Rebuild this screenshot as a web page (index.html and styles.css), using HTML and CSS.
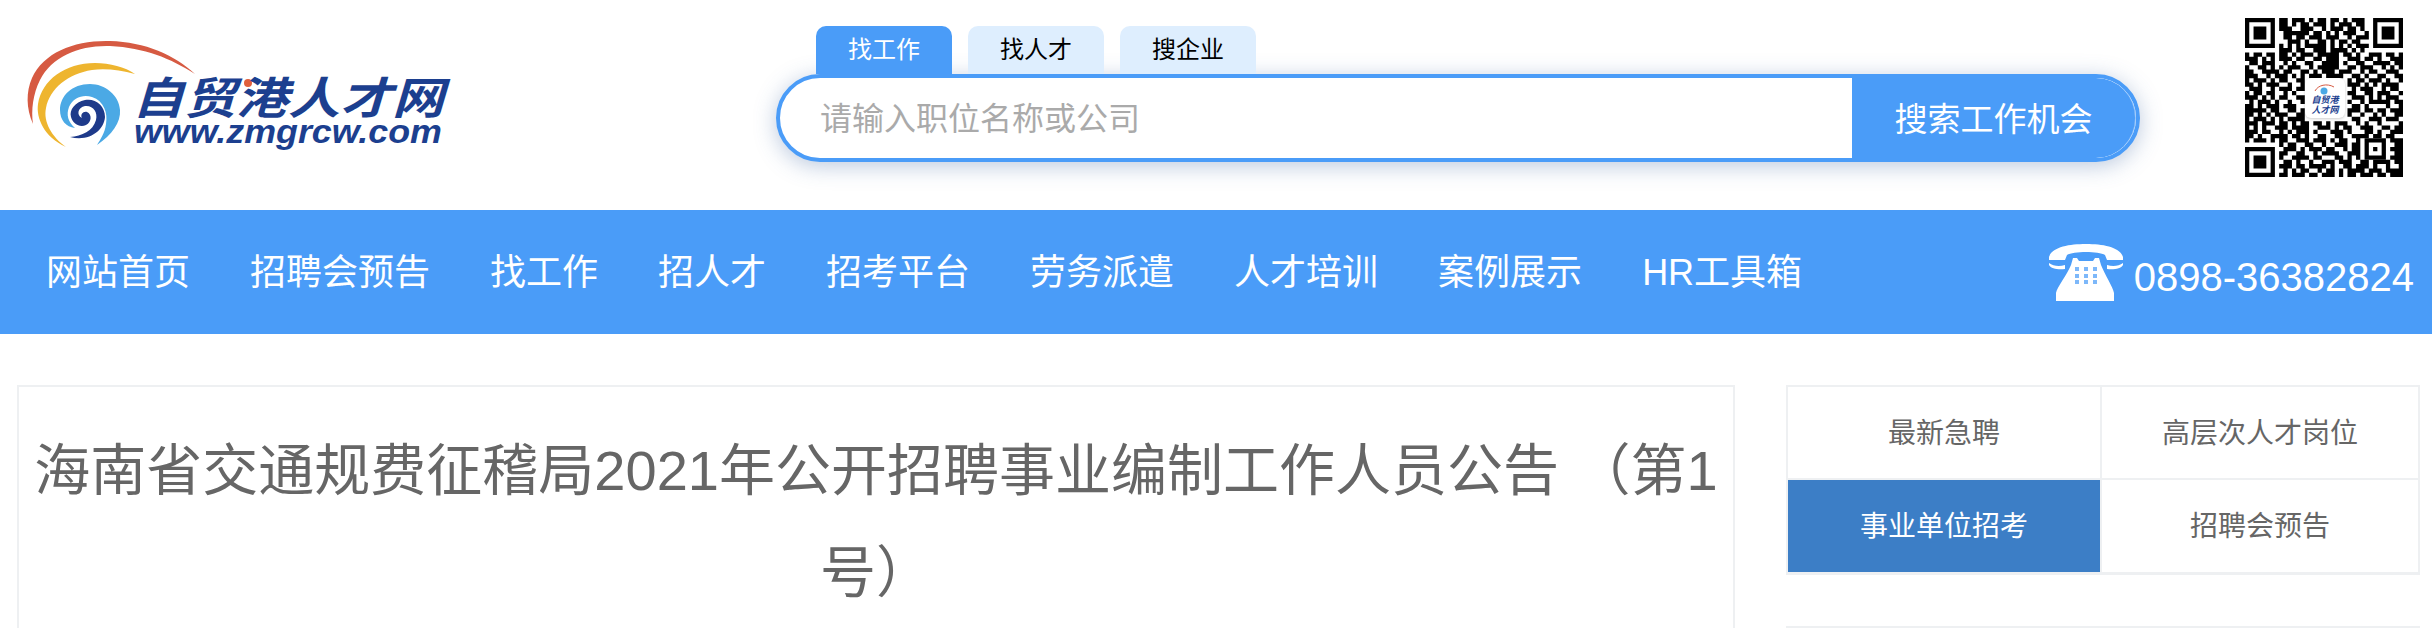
FILE: index.html
```html
<!DOCTYPE html>
<html lang="zh-CN">
<head>
    <meta charset="UTF-8">
    <meta name="viewport" content="width=device-width, initial-scale=1.0">
    <title>海南省交通规费征稽局2021年公开招聘事业编制工作人员公告</title>
    <link rel="stylesheet" href="styles.css">
</head>
<body>
    <header class="header">
        <a class="logo" href="#">
            <svg width="460" height="160" viewBox="0 0 460 160">
                <path fill="#d65a42" d="M33 124C26 108 26 92 32 78C44 52 75 40 110 41C145 42 175 55 195 74C170 58 145 48 110 46C80 45 52 56 40 80C33 94 31 110 33 124Z"/>
                <path fill="#eeb52f" d="M66 147C44 137 36 118 38 104C42 80 65 63 95 63C110 63 125 67 135 74C120 70 105 68 92 70C68 74 50 88 46 108C43 122 52 137 66 147Z"/>
                <path fill="#4ba9e5" d="M97 145C112 135 121 122 120 110C119 95 105 84 90 84C72 84 60 96 60 110C60 120 66 127 75 128C68 122 66 115 69 107C73 97 84 94 92 97C104 101 108 113 106 124C105 133 100 140 97 145Z"/>
                <path fill="#1e3a8a" d="M70 137C90 142 104 130 105 117C105 105 95 98 85 100C75 102 69 110 71 117C73 124 80 128 86 125C92 122 92 114 87 112C83 111 80 115 82 118C76 115 78 107 85 106C93 105 98 112 96 120C93 131 82 136 70 137Z"/>
                <circle fill="#e0603c" cx="248" cy="83" r="4"/>
                <text class="logo-cn" x="132" y="114" textLength="312" lengthAdjust="spacingAndGlyphs">自贸港人才网</text>
                <text class="logo-en" x="134" y="143" textLength="308" lengthAdjust="spacingAndGlyphs">www.zmgrcw.com</text>
            </svg>
        </a>

        <div class="search">
            <div class="search-tabs">
                <a class="search-tab active" href="#">找工作</a>
                <a class="search-tab" href="#">找人才</a>
                <a class="search-tab" href="#">搜企业</a>
            </div>
            <form class="search-box">
                <input class="search-input" type="text" placeholder="请输入职位名称或公司">
                <button class="search-btn" type="button">搜索工作机会</button>
            </form>
        </div>

        <div class="qrcode">
            <svg width="158" height="159" viewBox="0 0 37 37" preserveAspectRatio="none">
                <path fill-rule="evenodd" d="M0 0h7v7h-7zM1 1v5h5v-5zM2 2h3v3h-3zM30 0h7v7h-7zM31 1v5h5v-5zM32 2h3v3h-3zM0 30h7v7h-7zM1 31v5h5v-5zM2 32h3v3h-3zM28 28h5v5h-5zM29 29v3h3v-3zM30 30h1v1h-1z"/>
                <path stroke="#000" fill="none" d="M8 .5h2M11 .5h3M15 .5h1M17 .5h2M20 .5h2M23 .5h1M25 .5h3
                    M8 1.500h2M11 1.500h1M13 1.500h2M16 1.500h3M20 1.500h1M22 1.500h3M26 1.500h2
                    M8 2.500h2M10 2.500h1M13 2.500h3M18 2.500h1M20 2.500h3M24 2.500h2M27 2.500h1
                    M9 3.500h6M16 3.500h2M19 3.500h1M21 3.500h1M23 3.500h3M28 3.500h1
                    M9 4.500h2M12 4.500h2M15 4.500h3M19 4.500h3M24 4.500h1M26 4.500h3
                    M10 5.500h3M14 5.500h1M17 5.500h2M20 5.500h1M22 5.500h2M25 5.500h2
                    M8 6.500h1M10 6.500h1M12 6.500h1M14 6.500h5M20 6.500h1M22 6.500h1M24 6.500h1M26 6.500h3
                    M8 7.500h3M12 7.500h2M16 7.500h3M20 7.500h4M25 7.500h1M27 7.500h1
                    M0 8.500h1M2 8.500h2M5 8.500h2M8 8.500h2M11 8.500h1M13 8.500h3M17 8.500h5M23 8.500h2M26 8.500h1M29 8.500h3M33 8.500h2M36 8.500h1
                    M0 9.500h3M4 9.500h1M6 9.500h1M8 9.500h3M12 9.500h2M16 9.500h2M19 9.500h3M24 9.500h3M28 9.500h2M31 9.500h1M34 9.500h3
                    M1 10.500h2M4 10.500h3M9 10.500h1M11 10.500h1M14 10.500h2M18 10.500h4M23 10.500h1M26 10.500h2M30 10.500h4M35 10.500h2
                    M0 11.500h1M3 11.500h2M6 11.500h1M8 11.500h1M10 11.500h3M15 11.500h1M17 11.500h5M24 11.500h2M27 11.500h3M32 11.500h1M34 11.500h1M36 11.500h1
                    M0 12.500h2M4 12.500h4M9 12.500h2M13 12.500h2M16 12.500h1M18 12.500h3M22 12.500h3M27 12.500h1M29 12.500h2M33 12.500h3
                    M0 13.500h3M5 13.500h1M7 13.500h3M11 13.500h1M13 13.500h1M15 13.500h3M19 13.500h4M25 13.500h2M28 13.500h1M31 13.500h2M35 13.500h2
                    M0 14.500h1M2 14.500h3M6 14.500h1M8 14.500h2M12 14.500h2M24 14.500h1M26 14.500h2M29 14.500h3M33 14.500h1M36 14.500h1
                    M0 15.500h2M3 15.500h1M5 15.500h3M10 15.500h1M13 15.500h1M24 15.500h3M28 15.500h1M30 15.500h1M32 15.500h4
                    M1 16.500h3M6 16.500h1M8 16.500h3M12 16.500h2M25 16.500h1M27 16.500h3M32 16.500h1M34 16.500h2
                    M0 17.500h1M2 17.500h2M5 17.500h2M9 17.500h1M11 17.500h1M24 17.500h2M28 17.500h2M31 17.500h3M36 17.500h1
                    M0 18.500h3M4 18.500h1M6 18.500h1M8 18.500h2M12 18.500h2M25 18.500h3M29 18.500h1M31 18.500h1M33 18.500h3
                    M1 19.500h1M3 19.500h3M7 19.500h1M10 19.500h1M13 19.500h1M24 19.500h1M27 19.500h1M29 19.500h5M35 19.500h2
                    M0 20.500h2M3 20.500h1M5 20.500h3M9 20.500h3M25 20.500h2M28 20.500h1M33 20.500h1M36 20.500h1
                    M0 21.500h5M6 21.500h2M10 21.500h2M13 21.500h1M24 21.500h3M28 21.500h2M31 21.500h2M34 21.500h3
                    M0 22.500h2M3 22.500h1M5 22.500h1M7 22.500h3M12 22.500h2M24 22.500h1M27 22.500h1M30 22.500h1M32 22.500h1M35 22.500h2
                    M0 23.500h1M2 23.500h3M6 23.500h1M8 23.500h1M10 23.500h4M25 23.500h2M29 23.500h3M33 23.500h3
                    M0 24.500h3M4 24.500h3M8 24.500h2M11 24.500h1M13 24.500h2M16 24.500h2M19 24.500h1M21 24.500h3M26 24.500h1M28 24.500h1M31 24.500h1M36 24.500h1
                    M0 25.500h1M2 25.500h1M4 25.500h1M7 25.500h3M11 25.500h4M17 25.500h3M21 25.500h1M23 25.500h2M27 25.500h3M32 25.500h2M35 25.500h2
                    M0 26.500h3M4 26.500h2M8 26.500h1M10 26.500h1M12 26.500h3M16 26.500h1M20 26.500h3M24 26.500h1M28 26.500h2M31 26.500h1M34 26.500h3
                    M0 27.500h2M3 27.500h1M6 27.500h4M11 27.500h2M14 27.500h1M17 27.500h2M21 27.500h2M25 27.500h4M30 27.500h2M33 27.500h2
                    M0 28.500h1M2 28.500h3M6 28.500h1M8 28.500h2M12 28.500h3M16 28.500h3M20 28.500h1M22 28.500h2M26 28.500h1M34 28.500h3
                    M8 29.500h1M10 29.500h2M14 29.500h2M18 29.500h1M21 29.500h3M25 29.500h2M35 29.500h2
                    M9 30.500h3M13 30.500h1M15 30.500h3M19 30.500h2M23 30.500h1M25 30.500h2M34 30.500h3
                    M8 31.500h2M12 31.500h2M16 31.500h1M18 31.500h4M24 31.500h3M35 31.500h2
                    M8 32.500h1M11 32.500h4M16 32.500h2M21 32.500h2M24 32.500h1M26 32.500h1M34 32.500h3
                    M9 33.500h2M12 33.500h1M15 33.500h1M18 33.500h3M22 33.500h3M27 33.500h2M30 33.500h4M35 33.500h2
                    M8 34.500h3M12 34.500h2M15 34.500h4M20 34.500h1M23 34.500h2M26 34.500h3M30 34.500h1M33 34.500h1M36 34.500h1
                    M9 35.500h1M11 35.500h1M13 35.500h2M17 35.500h1M19 35.500h2M22 35.500h1M24 35.500h4M29 35.500h3M33 35.500h2M35 35.500h2
                    M8 36.500h2M11 36.500h3M15 36.500h2M18 36.500h3M22 36.500h1M24 36.500h2M27 36.500h3M31 36.500h2M34 36.500h3"/>
            </svg>
            <div class="qrcode-logo">
                <svg width="22" height="12" viewBox="0 0 22 12">
                    <path fill="none" stroke="#d65a42" d="M1 8C4 2 13 0 20 4"/>
                    <circle fill="#4ba9e5" cx="10" cy="8" r="3.500"/>
                </svg>
                <span class="qrcode-text">自贸港</span>
                <span class="qrcode-text">人才网</span>
            </div>
        </div>
    </header>

    <nav class="nav">
        <ul class="nav-list">
            <li><a href="#">网站首页</a></li>
            <li><a href="#">招聘会预告</a></li>
            <li><a href="#">找工作</a></li>
            <li><a href="#">招人才</a></li>
            <li><a href="#">招考平台</a></li>
            <li><a href="#">劳务派遣</a></li>
            <li><a href="#">人才培训</a></li>
            <li><a href="#">案例展示</a></li>
            <li><a href="#">HR工具箱</a></li>
        </ul>
        <div class="tel">
            <svg class="tel-icon" width="76" height="60" viewBox="9 8 76 60">
                <path fill="#fff" d="M10 22C13 12 30 9 47 9C64 9 81 12 84 22L84 25L68 25L66 20C60 16 34 16 28 20L26 25L10 25Z"/>
                <path fill="#fff" d="M10 28C14 31 20 32 26 30L26 34C20 35 12 34 10 30ZM84 28C80 31 74 32 68 30L68 34C74 35 82 34 84 30Z"/>
                <path fill="#fff" d="M34 23L38 23L40 26L54 26L56 23L60 23L62 30C66 40 74 52 75 58L75 66L17 66L17 58C18 52 28 40 32 30Z"/>
                <path fill="#7db8fa" d="M36 32h4v4h-4zM45 32h4v4h-4zM54 32h4v4h-4zM36 39h4v4h-4zM45 39h4v4h-4zM54 39h4v4h-4zM36 45h4v4h-4zM45 45h4v4h-4zM54 45h4v4h-4z"/>
            </svg>
            <span class="tel-num">0898-36382824</span>
        </div>
    </nav>

    <div class="main">
        <div class="article">
            <h1 class="article-title">海南省交通规费征稽局2021年公开招聘事业编制工作人员公告 （第1号）</h1>
        </div>
        <aside class="side">
            <div class="side-tabs">
                <a class="side-tab" href="#">最新急聘</a>
                <a class="side-tab" href="#">高层次人才岗位</a>
                <a class="side-tab active" href="#">事业单位招考</a>
                <a class="side-tab" href="#">招聘会预告</a>
            </div>
            <div class="side-box"></div>
        </aside>
    </div>
</body>
</html>
```

FILE: styles.css
```css
html, body {
    height: 100%;
    overflow: hidden;
}
body {
    margin: 0;
    font-family: "Liberation Sans", "Noto Sans CJK SC", sans-serif;
    background-color: #fff;
    color: #666;
}
a {
    color: inherit;
    text-decoration: none;
}

/* header */
.header {
    display: flex;
    height: 210px;
}
.logo {
    display: block;
    width: 460px;
    height: 160px;
}
.logo-cn {
    font-family: "Noto Sans CJK SC", sans-serif;
    font-size: 44px;
    font-weight: 700;
    font-style: italic;
    fill: #1c3f8f;
}
.logo-en {
    font-family: "Liberation Sans", sans-serif;
    font-size: 33px;
    font-weight: 700;
    font-style: italic;
    fill: #1c3f8f;
}
.search {
    width: 1364px;
    margin-left: 316px;
    padding-top: 26px;
}
.search-tabs {
    display: flex;
    gap: 16px;
    padding-left: 40px;
}
.search-tab {
    width: 136px;
    height: 48px;
    line-height: 48px;
    text-align: center;
    font-size: 24px;
    color: #000;
    background-color: #deeefe;
    border-radius: 10px 10px 0 0;
}
.search-tab.active {
    color: #fff;
    background-color: #4a9cf8;
}
.search-box {
    display: flex;
    height: 88px;
    box-sizing: border-box;
    border: 4px solid #4a9cf8;
    border-radius: 44px;
    background: #fff;
    box-shadow: 0 4px 22px rgba(60, 100, 160, 0.35);
}
.search-input {
    flex: 1;
    min-width: 0;
    padding: 0 0 4px 40px;
    border: none;
    outline: none;
    background: none;
    font-family: "Noto Sans CJK SC", sans-serif;
    font-size: 32px;
}
.search-input::placeholder {
    color: #aaa;
}
.search-btn {
    width: 284px;
    padding: 0 0 2px;
    border: none;
    border-right: 1px solid rgba(255, 255, 255, 0.4);
    border-radius: 0 40px 40px 0;
    background-color: #4a9cf8;
    color: #fff;
    font-family: "Noto Sans CJK SC", sans-serif;
    font-size: 33px;
}
.qrcode {
    position: relative;
    width: 158px;
    height: 159px;
    margin: 18px 0 0 105px;
}
.qrcode > svg {
    display: block;
}
.qrcode-logo {
    position: absolute;
    left: 60px;
    top: 60px;
    width: 40px;
    height: 40px;
    box-sizing: border-box;
    padding-top: 5px;
    display: flex;
    flex-direction: column;
    align-items: center;
    background: #fff;
    border-radius: 6px;
    box-shadow: 0 1px 3px rgba(0, 0, 0, 0.2);
}
.qrcode-text {
    font-family: "Noto Sans CJK SC", sans-serif;
    font-size: 9px;
    line-height: 10px;
    font-weight: 700;
    font-style: italic;
    color: #1c3f8f;
}

/* nav */
.nav {
    display: flex;
    justify-content: space-between;
    height: 124px;
    background-color: #4a9cf8;
    color: #fff;
}
.nav-list {
    display: flex;
    margin: 0;
    padding: 0 0 0 16px;
    list-style: none;
}
.nav-list a {
    display: block;
    padding: 0 30px;
    line-height: 125px;
    font-size: 36px;
}
.tel {
    display: flex;
    align-items: center;
    padding-right: 18px;
}
.tel-icon {
    margin-top: 2px;
    margin-right: 10px;
}
.tel-num {
    margin-top: 10px;
    font-size: 40px;
}

/* main */
.main {
    display: flex;
    gap: 51px;
    padding: 51px 12px 0 17px;
}
.article {
    width: 1718px;
    min-height: 600px;
    box-sizing: border-box;
    border: 2px solid #eef0f2;
    padding: 33px 10px 0;
}
.article-title {
    margin: 0;
    text-align: center;
    font-size: 56px;
    font-weight: 400;
    line-height: 102px;
    color: #666;
}
.side {
    width: 634px;
}
.side-tabs {
    display: grid;
    grid-template-columns: 314px 1fr;
    grid-template-rows: 93px 92px;
    border: 2px solid #eef0f2;
    border-bottom-width: 3px;
    margin-bottom: 51px;
}
.side-tab {
    display: flex;
    align-items: center;
    justify-content: center;
    padding-bottom: 4px;
    font-size: 28px;
    color: #666;
}
.side-tab:nth-child(odd) {
    border-right: 2px solid #eef0f2;
}
.side-tab:nth-child(-n+2) {
    border-bottom: 2px solid #eef0f2;
}
.side-tab.active {
    color: #fff;
    background-color: #3c7ec6;
}
.side-box {
    height: 200px;
    border: 2px solid #eef0f2;
}
```
